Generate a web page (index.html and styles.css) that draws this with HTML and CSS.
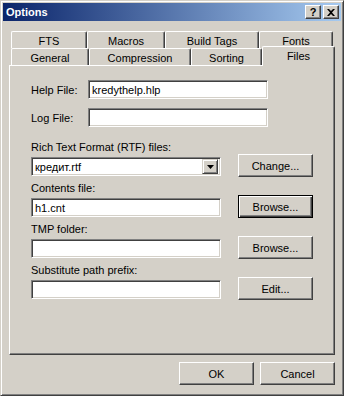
FILE: index.html
```html
<!DOCTYPE html>
<html lang="en">

<head>
    <title>Options</title>
    <!--Stylesheet-->
    <link rel="stylesheet" href="styles.css">
</head>

<body>
    <div class="window">
        <div class="titlebar">
            <span class="title">Options</span>
            <div class="caption-buttons">
                <span class="cap-btn help">?</span>
                <span class="cap-btn close">
                    <svg width="8" height="7" viewBox="0 0 8 7">
                        <path d="M0 0h2l2 2 2-2h2L5 3.5 8 7H6L4 5 2 7H0l3-3.5z" fill="#000"/>
                    </svg>
                </span>
            </div>
        </div>

        <div class="tabs">
            <div class="tab-row back">
                <div class="tab w-fts">FTS</div>
                <div class="tab w-macros">Macros</div>
                <div class="tab w-build">Build Tags</div>
                <div class="tab w-fonts">Fonts</div>
            </div>
            <div class="tab-row front">
                <div class="tab w-general">General</div>
                <div class="tab w-compression">Compression</div>
                <div class="tab w-sorting">Sorting</div>
                <div class="tab active w-files">Files</div>
            </div>
        </div>

        <div class="panel">
            <div class="inline-row">
                <label class="inline-label">Help File:</label>
                <div class="field wide">kredythelp.hlp</div>
            </div>
            <div class="inline-row">
                <label class="inline-label">Log File:</label>
                <div class="field wide"></div>
            </div>

            <div class="group first">
                <div class="stack">
                    <label>Rich Text Format (RTF) files:</label>
                    <div class="field combo">
                        <span class="combo-text">кредит.rtf</span>
                        <span class="combo-arrow">
                            <svg width="7" height="4" viewBox="0 0 7 4"><path d="M0 0h7L3.5 4z" fill="#000"/></svg>
                        </span>
                    </div>
                </div>
                <button class="btn">Change...</button>
            </div>

            <div class="group">
                <div class="stack">
                    <label>Contents file:</label>
                    <div class="field">h1.cnt</div>
                </div>
                <button class="btn default">Browse...</button>
            </div>

            <div class="group">
                <div class="stack">
                    <label>TMP folder:</label>
                    <div class="field"></div>
                </div>
                <button class="btn">Browse...</button>
            </div>

            <div class="group">
                <div class="stack">
                    <label>Substitute path prefix:</label>
                    <div class="field"></div>
                </div>
                <button class="btn">Edit...</button>
            </div>
        </div>

        <div class="actions">
            <button class="btn">OK</button>
            <button class="btn">Cancel</button>
        </div>
    </div>
</body>

</html>
```

FILE: styles.css
```css
*,
*:before,
*:after {
    padding: 0;
    margin: 0;
    box-sizing: border-box;
}

body {
    width: 344px;
    height: 396px;
    background: #d4d0c8;
    font-family: "Liberation Sans", Arial, sans-serif;
    font-size: 11px;
    color: #000;
}

.window {
    width: 344px;
    height: 396px;
    background: #d4d0c8;
    border: 1px solid;
    border-color: #d4d0c8 #404040 #404040 #d4d0c8;
    box-shadow: inset 1px 1px 0 #fff, inset -1px -1px 0 #808080;
    padding: 2px 8px 0 8px;
}

.titlebar {
    height: 18px;
    margin: 0 -6px;
    display: flex;
    align-items: center;
    justify-content: space-between;
    padding: 0 2px 0 3px;
    background: linear-gradient(90deg, #0a246a, #a6caf0);
}

.title {
    color: #fff;
    font-weight: bold;
    font-size: 11px;
}

.caption-buttons {
    display: flex;
    gap: 2px;
}

.cap-btn {
    width: 16px;
    height: 14px;
    display: flex;
    align-items: center;
    justify-content: center;
    background: #d4d0c8;
    border: 1px solid;
    border-color: #fff #404040 #404040 #fff;
    box-shadow: inset -1px -1px 0 #808080;
    font-weight: bold;
    font-size: 11px;
    line-height: 1;
}

/* tabs */
.tabs {
    margin-top: 10px;
    padding-left: 2px;
}

.tab-row {
    display: flex;
    height: 17px;
}

.tab {
    height: 17px;
    display: flex;
    align-items: center;
    justify-content: center;
    background: #d4d0c8;
    border-top: 1px solid #fff;
    border-left: 1px solid #fff;
    border-right: 1px solid #404040;
    border-radius: 2px 2px 0 0;
    box-shadow: inset -1px 0 0 #808080;
    padding-top: 1px;
}

.w-fts { width: 76px; }
.w-macros { width: 78px; }
.w-build { width: 94px; }
.w-fonts { width: 74px; }

.w-general { width: 78px; }
.w-compression { width: 102px; }
.w-sorting { width: 71px; }
.w-files { width: 73px; }

.tab.active {
    height: 20px;
    margin-top: -2px;
    position: relative;
    z-index: 2;
    padding-top: 0;
    padding-bottom: 1px;
}

/* panel */
.panel {
    height: 290px;
    border: 1px solid;
    border-color: #fff #404040 #404040 #fff;
    box-shadow: inset -1px -1px 0 #808080;
    padding: 14px 0 0 21px;
}

.inline-row {
    display: flex;
    align-items: center;
    height: 19px;
    margin-bottom: 9px;
}

.inline-label {
    width: 57px;
}

.field {
    height: 19px;
    background: #fff;
    border: 1px solid;
    border-color: #808080 #fff #fff #808080;
    box-shadow: inset 1px 1px 0 #404040, inset -1px -1px 0 #d4d0c8;
    padding: 0 3px;
    width: 190px;
    display: flex;
    align-items: center;
}

.field.wide {
    width: 180px;
}

.combo {
    padding-right: 2px;
    justify-content: space-between;
}

.combo-arrow {
    width: 16px;
    height: 15px;
    display: flex;
    align-items: center;
    justify-content: center;
    background: #d4d0c8;
    border: 1px solid;
    border-color: #d4d0c8 #404040 #404040 #d4d0c8;
    box-shadow: inset 1px 1px 0 #fff, inset -1px -1px 0 #808080;
}

.group {
    display: flex;
    align-items: flex-end;
    margin-top: 6px;
}

.group.first {
    margin-top: 14px;
}

.group.lower {
    margin-top: 7px;
}

.stack {
    display: flex;
    flex-direction: column;
    gap: 3px;
}

.stack label {
    line-height: 13px;
}

.btn {
    width: 75px;
    height: 23px;
    margin-left: 17px;
    margin-bottom: -1px;
    font-family: inherit;
    font-size: 11px;
    color: #000;
    background: #d4d0c8;
    border: 1px solid;
    border-color: #fff #404040 #404040 #fff;
    box-shadow: inset -1px -1px 0 #808080;
}

.btn.default {
    border-color: #000;
    box-shadow: inset 1px 1px 0 #fff, inset -1px -1px 0 #404040, inset -2px -2px 0 #808080;
}

.actions {
    display: flex;
    justify-content: flex-end;
    gap: 6px;
    margin-top: 7px;
}

.actions .btn {
    margin: 0;
}
```
